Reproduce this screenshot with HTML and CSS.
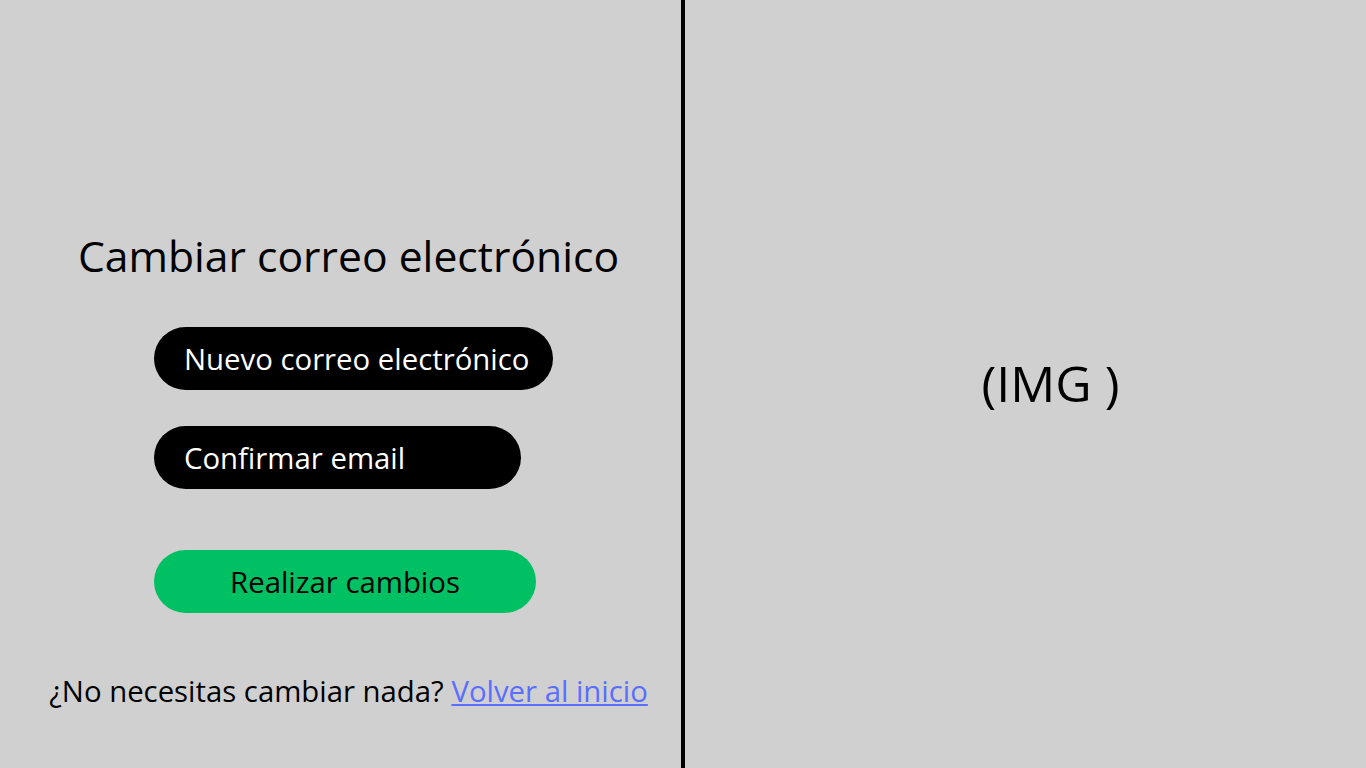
FILE: index.html
```html
<!DOCTYPE html>
<html lang="es">
<head>
<meta charset="utf-8">
<title>Cambiar correo electrónico</title>
<link rel="stylesheet" href="styles.css">
</head>
<body>
<main class="page">
  <section class="left">
    <h1 class="title">Cambiar correo electrónico</h1>
    <form class="form">
      <input class="field field-new" type="email" placeholder="Nuevo correo electrónico">
      <input class="field field-confirm" type="email" placeholder="Confirmar email">
      <button class="submit" type="button">Realizar cambios</button>
    </form>
    <p class="back">¿No necesitas cambiar nada? <a href="#">Volver al inicio</a></p>
  </section>
  <div class="divider"></div>
  <section class="right">
    <span class="img-label">(IMG )</span>
  </section>
</main>
</body>
</html>
```

FILE: styles.css
```css
* { box-sizing: border-box; }
html, body {
  margin: 0;
  padding: 0;
  height: 100%;
}
body {
  background: #d0d0d0;
  font-family: "Open Sans", "DejaVu Sans", sans-serif;
  color: #000;
}
.page {
  display: grid;
  grid-template-columns: 681px 4px 1fr;
  height: 768px;
}
.divider {
  background: #000;
}
.left {
  display: flex;
  flex-direction: column;
  padding-left: 16px;
  padding-top: 228px;
}
.title {
  margin: 0;
  font-size: 42.67px;
  font-weight: 400;
  line-height: 56px;
  text-align: center;
}
.form {
  display: flex;
  flex-direction: column;
  align-items: flex-start;
  margin: 43px 0 0 138px;
}
.field {
  height: 63px;
  border: none;
  border-radius: 32px;
  background: #000;
  color: #fff;
  font-family: inherit;
  font-size: 29.33px;
  padding: 0 0 0 30px;
  outline: none;
}
.field::placeholder {
  color: #fff;
  opacity: 1;
}
.field-new { width: 399px; }
.field-confirm { width: 367px; margin-top: 36px; }
.submit {
  margin-top: 61px;
  width: 382px;
  height: 63px;
  border: none;
  border-radius: 32px;
  background: #00c064;
  color: #000;
  font-family: inherit;
  font-size: 29.33px;
  padding: 0;
}
.back {
  margin: 58px 0 0;
  font-size: 29.33px;
  line-height: 40px;
  text-align: center;
}
.back a {
  color: #5a6eff;
}
.right {
  display: flex;
  align-items: center;
  justify-content: center;
  padding-left: 50px;
  padding-bottom: 3px;
}
.img-label {
  font-size: 50px;
}
```
